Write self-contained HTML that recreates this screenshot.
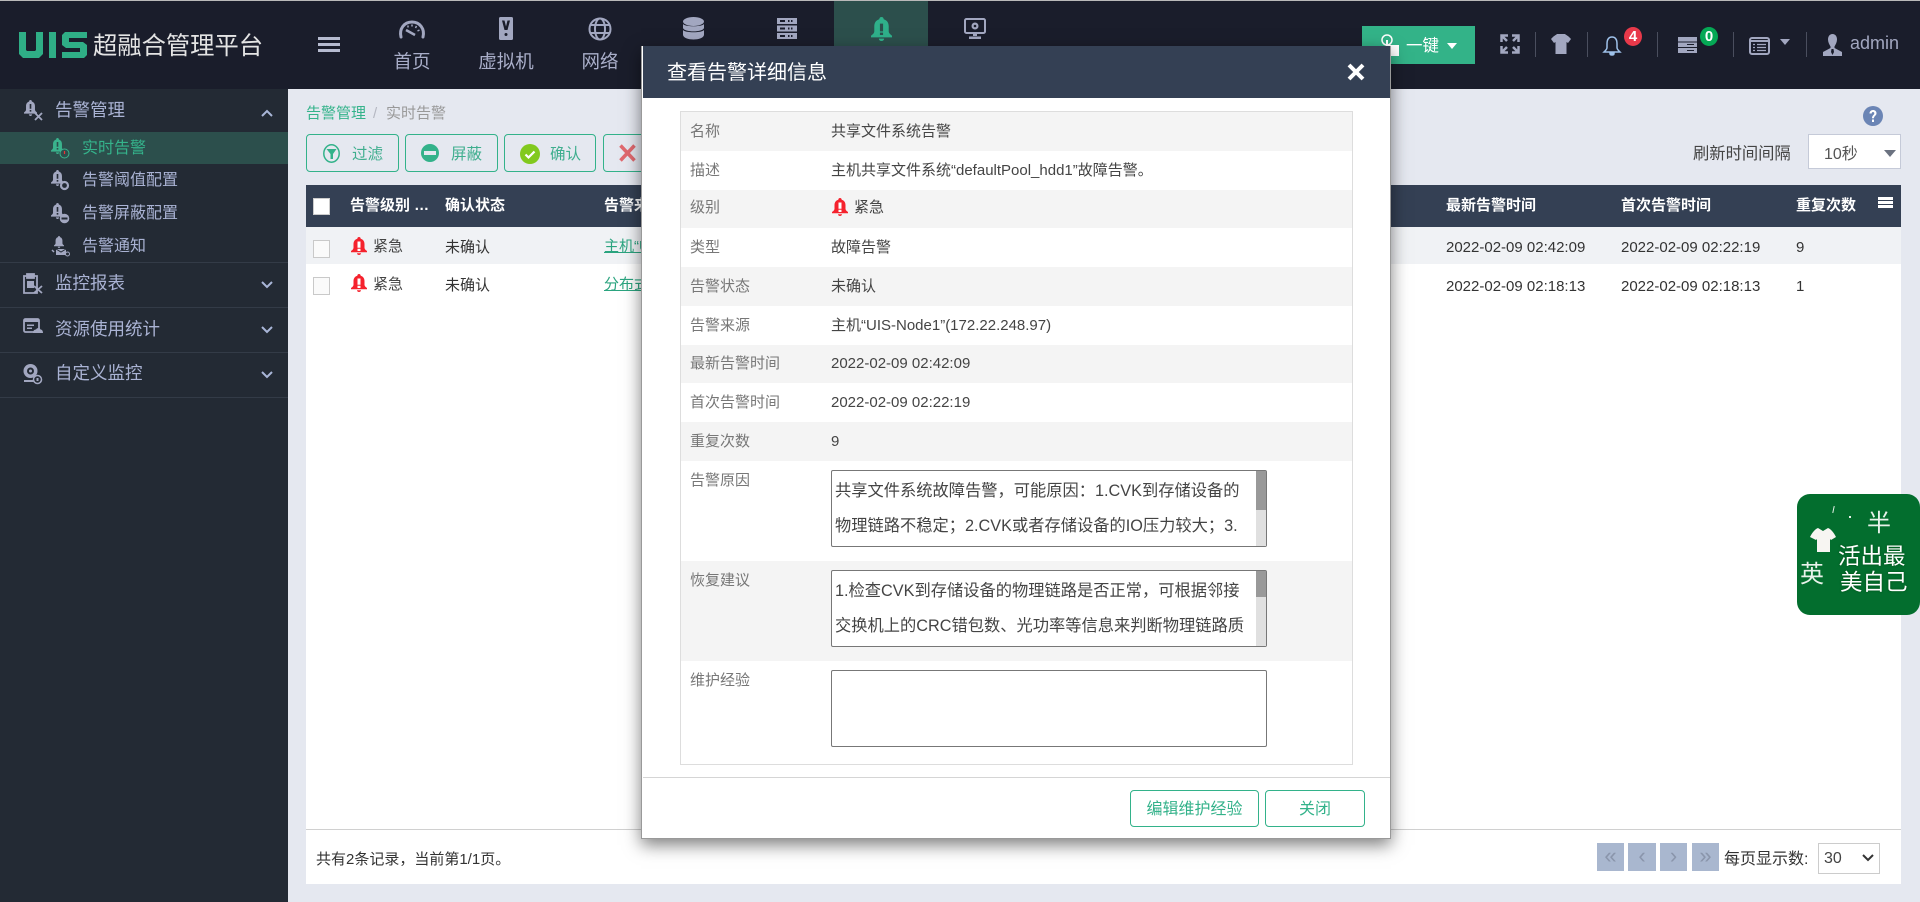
<!DOCTYPE html>
<html lang="zh"><head><meta charset="utf-8"><title>UIS 超融合管理平台</title>
<style>
*{box-sizing:border-box}
html,body{margin:0;padding:0}
body{width:1920px;height:902px;position:relative;overflow:hidden;background:#e5e8f0;font-family:"Liberation Sans","Noto Sans CJK SC",sans-serif;font-size:15px;color:#444}
.a{position:absolute}
.t{position:absolute;line-height:20px;white-space:nowrap}
svg{position:absolute;overflow:visible}
.nav{color:#a9aec9;font-size:18.5px;transform:translateX(-50%)}
.grp{color:#aab3d4;font-size:17.5px;left:55px}
.sub{color:#aab3d4;font-size:16px;left:82px}
.sep{position:absolute;height:1px;left:0;width:288px;background:#333b47}
.vs{position:absolute;top:32px;width:1px;height:25px;background:#4a4e5e}
.btn{position:absolute;top:134px;height:38px;border:1px solid #33b28a;border-radius:4px}
.bt{color:#3fae8e;font-size:15.5px}
.th{color:#fff;font-size:15px;font-weight:bold;top:196px}
.row{position:absolute;left:681px;width:671px;height:39px}
.g{background:#f4f4f4}
.l{left:690px;color:#777;font-size:15px}
.v{left:831px;color:#444;font-size:15px}
.ta{position:absolute;left:831px;width:436px;height:77px;border:1px solid #777;border-radius:2px;background:#fff}
.sb{position:absolute;right:0;top:0;bottom:0;width:10px;background:#e0e0e0}
.sb i{display:block;height:39px;background:#999}
.tl{left:835px;color:#444;font-size:16.25px}
.pg{position:absolute;top:843px;height:28px;background:#a9b7cf;color:#8a95ab;text-align:center;line-height:25px;font-size:22px}
.ck{position:absolute;left:313px;width:17px;height:18px;background:#fafafa;border:1px solid #c9c9c9}
.hd{position:absolute;left:0;top:0;width:1920px;height:89px;background:#1a1d2b}
</style></head><body>
<svg width="0" height="0" style="position:absolute"><defs>
<symbol id="bell" viewBox="0 0 16 20" preserveAspectRatio="none"><path d="M8 0c1.100 0 1.600.8 1.700 1.900 2.600.9 3.800 3 3.800 6V12c0 1.400 1 2.400 2.500 3.600V17H0v-1.400C1.500 14.400 2.500 13.400 2.500 12V7.900c0-3 1.200-5.100 3.800-6C6.400.8 6.900 0 8 0zM6 18h4c0 1.200-.9 2-2 2s-2-.8-2-2z"/></symbol>
</defs></svg>

<div class="hd"></div>
<div class="a" style="left:0;top:0;width:1920px;height:1px;background:#b9b9b9"></div>

<!-- logo -->
<svg style="left:19px;top:32px" width="68" height="26" viewBox="0 0 68 26"><g fill="#2fae86"><path d="M0 0h7v18l1 1h8l1-1V0h7v22l-4 4H4l-4-4z"/><path d="M30 0h7v26h-7z"/><path d="M46 0h22v6H50v4h14l4 3v10l-3 3H43v-6h18v-4H47l-4-3V3z"/></g></svg>
<div class="t" style="left:93px;top:35px;font-size:24.3px;line-height:24px;color:#e4e4e4">超融合管理平台</div>

<!-- hamburger -->
<div class="a" style="left:318px;top:37px;width:22px;height:3px;background:#b6bbd0"></div>
<div class="a" style="left:318px;top:43px;width:22px;height:3px;background:#b6bbd0"></div>
<div class="a" style="left:318px;top:49px;width:22px;height:3px;background:#b6bbd0"></div>

<!-- nav -->
<div class="a" style="left:834px;top:1px;width:94px;height:46px;background:#2c4f4c"></div>
<svg style="left:399px;top:20px" width="26" height="18" viewBox="0 0 26 18" fill="none" stroke="#a2a7c0"><path d="M2 17C0 9 5 2 13 2s13 7 11 15" stroke-width="3" stroke-linecap="round"/><path d="M7 10l9 5" stroke-width="2.500"/><path d="M9 5.500v2M13 4.500v2M17.500 6l-1 2M20.500 10l-2 1" stroke-width="1.500"/></svg>
<svg style="left:499px;top:17px" width="14" height="23" viewBox="0 0 14 23"><rect width="14" height="23" rx="1.500" fill="#a2a7c0"/><path d="M3 3.500h2.500L7 9.500 8.500 3.500H11L8.500 13h-3z" fill="#1a1d2b"/><circle cx="7" cy="17.500" r="1.500" fill="#1a1d2b"/></svg>
<svg style="left:588px;top:17px" width="24" height="24" viewBox="0 0 24 24" fill="none" stroke="#a2a7c0" stroke-width="2"><circle cx="12" cy="12" r="10.500"/><ellipse cx="12" cy="12" rx="5" ry="10.500"/><path d="M2.500 8h19M2.500 16h19"/></svg>
<svg style="left:683px;top:17px" width="21" height="23" viewBox="0 0 21 23" fill="#a2a7c0"><ellipse cx="10.500" cy="4.500" rx="10.500" ry="4.500"/><path d="M0 7c2 3 19 3 21 0v4c-1 4.500-20 4.500-21 0zM0 13c2 3 19 3 21 0v5c-1 6-20 6-21 0z"/></svg>
<svg style="left:777px;top:18px" width="20" height="21" viewBox="0 0 20 21" fill="#a2a7c0"><path d="M0 0h20v6H0zM0 7.500h20v6H0zM0 15h20v6H0z"/><path d="M3 2h5v2H3zM3 9.500h5v2H3zM3 17h5v2H3zM11 2h1.500v2H11zM14 2h1.500v2H14zM11 9.500h1.500v2H11zM14 9.500h1.500v2H14zM11 17h1.500v2H11zM14 17h1.500v2H14z" fill="#1a1d2b"/></svg>
<svg style="left:871px;top:17px" width="21" height="24" viewBox="0 0 16 20" preserveAspectRatio="none" fill="#2fb08a"><use href="#bell"/><path d="M6.800 5.500h2.400V12H6.800zM6.800 13h2.400v2H6.800z" fill="#2c4f4c"/></svg>
<svg style="left:964px;top:18px" width="22" height="21" viewBox="0 0 22 21"><rect x="1" y="1" width="20" height="14" rx="1.500" fill="none" stroke="#a2a7c0" stroke-width="2"/><circle cx="11" cy="8" r="3.500" fill="#a2a7c0"/><circle cx="11" cy="8" r="1.300" fill="#1a1d2b"/><path d="M9 16h4v2H9zM5 18.500h12V21H5z" fill="#a2a7c0"/></svg>
<div class="t nav" style="left:412px;top:52px">首页</div>
<div class="t nav" style="left:506px;top:52px">虚拟机</div>
<div class="t nav" style="left:600px;top:52px">网络</div>

<!-- top right -->
<div class="a" style="left:1362px;top:26px;width:113px;height:38px;background:#33b388"></div>
<svg style="left:1380px;top:33px" width="20" height="24" viewBox="0 0 20 24" fill="none"><circle cx="7" cy="7" r="5" stroke="#fff" stroke-width="1.500"/><path d="M6 7h2v8H6z" fill="#fff"/><path d="M7 12h12v11H8z" fill="#fff"/></svg>
<div class="t" style="left:1406px;top:36px;color:#fff;font-size:16.5px">一键</div>
<div class="a" style="left:1447px;top:43px;border-left:5px solid transparent;border-right:5px solid transparent;border-top:6px solid #fff"></div>
<svg style="left:1500px;top:34px" width="20" height="20" viewBox="0 0 20 20" fill="none" stroke="#a2a7c0" stroke-width="2.500"><path d="M1.500 8V1.500H8M1.500 1.500L7 7M18.500 8V1.500H12M18.500 1.500L13 7M1.500 12v6.500H8M1.500 18.500L7 13M18.500 12v6.500H12M18.500 18.500L13 13"/></svg>
<div class="vs" style="left:1535px"></div>
<svg style="left:1551px;top:34px" width="20" height="20" viewBox="0 0 20 20" fill="#a2a7c0"><path d="M6 0h8c1 1 3 1.500 6 5l-3 4-1.500-1V20h-11V8L3 9 0 5c3-3.500 5-4 6-5z"/></svg>
<div class="vs" style="left:1587px"></div>
<svg style="left:1603px;top:36px" width="18" height="20" viewBox="0 0 18 20" fill="none" stroke="#9fc2ea" stroke-width="1.500"><path d="M9 1c4 0 5 3.500 5 7v3.500c0 2 1.500 3 3 4.500H1c1.500-1.500 3-2.500 3-4.500V8c0-3.500 1-7 5-7zM7 17.500h4c0 2-4 2-4 0z"/></svg>
<div class="a" style="left:1624px;top:27px;width:18px;height:19px;border-radius:50%;background:#e8394a;color:#fff;text-align:center;line-height:19px;font-size:15px;font-weight:bold">4</div>
<div class="vs" style="left:1657px"></div>
<svg style="left:1678px;top:37px" width="19" height="16" viewBox="0 0 19 16" fill="#a2a7c0"><path d="M0 0h19v4.500H0zM0 5.500h19V10H0zM0 11h19v5H0z"/><path d="M9 7h7v1H9zM9 13h7v1H9z" fill="#1a1d2b"/></svg>
<div class="a" style="left:1700px;top:27px;width:18px;height:19px;border-radius:50%;background:#05a855;color:#fff;text-align:center;line-height:19px;font-size:15px;font-weight:bold">0</div>
<div class="vs" style="left:1733px"></div>
<svg style="left:1749px;top:37px" width="21" height="18" viewBox="0 0 21 18" fill="none" stroke="#a2a7c0"><rect x="1" y="1" width="19" height="16" rx="2" stroke-width="2"/><path d="M1 4h19" stroke-width="2"/><path d="M8 7.500h9M8 10.500h9M8 13.500h9M4 7.500h2M4 10.500h2M4 13.500h2" stroke-width="1.300"/></svg>
<div class="a" style="left:1780px;top:39px;border-left:5px solid transparent;border-right:5px solid transparent;border-top:6px solid #a2a7c0"></div>
<div class="vs" style="left:1806px"></div>
<svg style="left:1823px;top:34px" width="19" height="22" viewBox="0 0 19 22" fill="#a2a7c0"><path d="M9.500 0c3 0 4.500 2.500 4.500 5.500 0 2.500-1.300 5-2.500 7v1.500l7.500 4V22H0v-4l7.500-4v-1.500C6.300 10.500 5 8 5 5.500 5 2.500 6.500 0 9.500 0z"/><path d="M8.500 15h2l.5 3-1.500 3-1.500-3z" fill="#1a1d2b"/></svg>
<div class="t" style="left:1850px;top:33px;color:#a2a7c0;font-size:18px">admin</div>

<!-- sidebar -->
<div class="a" style="left:0;top:89px;width:288px;height:813px;background:#232a34"></div>
<div class="a" style="left:0;top:132px;width:288px;height:32px;background:#2c4f4c"></div>
<svg style="left:24px;top:100px" width="19" height="21" viewBox="0 0 19 21"><svg width="13" height="16" viewBox="0 0 16 20" preserveAspectRatio="none" fill="#a2a7c0"><use href="#bell"/><path d="M7 5h2v6H7zM7 12.500h2v2H7z" fill="#232a34"/></svg><path d="M11 13l7 7M18 13l-7 7" stroke="#a2a7c0" stroke-width="1.800"/></svg>
<div class="t grp" style="top:100px">告警管理</div>
<svg style="left:261px;top:109px" width="12" height="8" fill="none" stroke="#a9b6d8" stroke-width="2"><path d="M1 7l5-5 5 5"/></svg>
<svg style="left:51px;top:138px" width="19" height="21" viewBox="0 0 19 21"><svg width="13" height="16" viewBox="0 0 16 20" preserveAspectRatio="none" fill="#3ab38d"><use href="#bell"/><path d="M7 5h2v6H7zM7 12.500h2v2H7z" fill="#2c4f4c"/></svg><circle cx="13.500" cy="15.500" r="4.500" fill="#2c4f4c" stroke="#3ab38d"/><path d="M13.500 13v3" stroke="#e33" stroke-width="1.200"/></svg>
<div class="t sub" style="top:139px;color:#35b38b">实时告警</div>
<svg style="left:51px;top:170px" width="19" height="21" viewBox="0 0 19 21"><svg width="13" height="16" viewBox="0 0 16 20" preserveAspectRatio="none" fill="#a2a7c0"><use href="#bell"/><path d="M7 5h2v6H7zM7 12.500h2v2H7z" fill="#232a34"/></svg><circle cx="13.500" cy="15.500" r="3.500" fill="#232a34" stroke="#a2a7c0" stroke-width="2.200"/></svg>
<div class="t sub" style="top:171px">告警阈值配置</div>
<svg style="left:51px;top:203px" width="19" height="21" viewBox="0 0 19 21"><svg width="13" height="16" viewBox="0 0 16 20" preserveAspectRatio="none" fill="#a2a7c0"><use href="#bell"/><path d="M7 5h2v6H7zM7 12.500h2v2H7z" fill="#232a34"/></svg><circle cx="13.500" cy="15.500" r="4.800" fill="#a2a7c0"/><path d="M10.500 14.500h6v2h-6z" fill="#232a34"/></svg>
<div class="t sub" style="top:204px">告警屏蔽配置</div>
<svg style="left:51px;top:236px" width="19" height="21" viewBox="0 0 19 21"><svg x="3" width="10" height="12" viewBox="0 0 16 20" preserveAspectRatio="none" fill="#a2a7c0"><use href="#bell"/></svg><path d="M5 13h10v6H5z" fill="#a2a7c0"/><path d="M5 13l5 3 5-3" stroke="#232a34" fill="none"/><circle cx="16.500" cy="18" r="2" fill="none" stroke="#a2a7c0"/><path d="M1 14l2 2" stroke="#a2a7c0" stroke-width="1.500"/></svg>
<div class="t sub" style="top:237px">告警通知</div>
<div class="sep" style="top:262px"></div>

<svg style="left:23px;top:273px" width="20" height="21" viewBox="0 0 20 21" fill="none" stroke="#a2a7c0" stroke-width="1.800"><path d="M11 3h3v17H1V3h3"/><path d="M4 1h7v4H4z" fill="#a2a7c0"/><path d="M4 8h7v7H4z" fill="#a2a7c0" stroke="none"/><path d="M11 13l8 7M19 13l-8 7" stroke-width="1.800"/></svg>
<div class="t grp" style="top:273px">监控报表</div>
<svg style="left:261px;top:281px" width="12" height="8" fill="none" stroke="#a9b6d8" stroke-width="2"><path d="M1 1l5 5 5-5"/></svg>
<div class="sep" style="top:307px"></div>

<svg style="left:23px;top:318px" width="20" height="16" viewBox="0 0 20 16"><rect x="1" y="1" width="15" height="13" rx="1.500" fill="none" stroke="#a2a7c0" stroke-width="1.800"/><path d="M1 1h15v3H1zM4 6.500h7v1.500H4zM4 9.500h5V11H4z" fill="#a2a7c0"/><path d="M10 15c0-3 2-3.500 3-3.500 1-2 4-2 4.500 0 2 0 2.500 2 2.500 3.500z" fill="#a2a7c0"/></svg>
<div class="t grp" style="top:319px">资源使用统计</div>
<svg style="left:261px;top:326px" width="12" height="8" fill="none" stroke="#a9b6d8" stroke-width="2"><path d="M1 1l5 5 5-5"/></svg>
<div class="sep" style="top:352px"></div>

<svg style="left:23px;top:364px" width="19" height="20" viewBox="0 0 19 20"><circle cx="7.500" cy="7" r="7" fill="#a2a7c0"/><circle cx="7.500" cy="7" r="3.500" fill="#232a34"/><circle cx="7.500" cy="7" r="1.500" fill="#a2a7c0"/><path d="M1 16h11v2H1z" fill="#a2a7c0"/><circle cx="14.500" cy="15.500" r="4" fill="#232a34" stroke="#a2a7c0" stroke-width="1.500"/><rect x="13.500" y="14" width="2" height="3" fill="#a2a7c0"/></svg>
<div class="t grp" style="top:363px">自定义监控</div>
<svg style="left:261px;top:371px" width="12" height="8" fill="none" stroke="#a9b6d8" stroke-width="2"><path d="M1 1l5 5 5-5"/></svg>
<div class="sep" style="top:397px"></div>

<!-- breadcrumb -->
<div class="t" style="left:306px;top:104px;font-size:15px;color:#35b38b">告警管理</div>
<div class="t" style="left:373px;top:104px;font-size:15px;color:#b5b8c2">/</div>
<div class="t" style="left:386px;top:104px;font-size:15px;color:#999">实时告警</div>
<svg style="left:1863px;top:106px" width="20" height="20" viewBox="0 0 20 20"><circle cx="10" cy="10" r="10" fill="#6b85b5"/><path d="M6.500 7.500C6.500 5.500 8 4 10 4s3.500 1.300 3.500 3.200c0 2.500-2.500 2.500-2.500 5H9c0-3 2.300-3.200 2.300-5 0-.7-.5-1.200-1.300-1.200s-1.300.6-1.300 1.500zM9 13.500h2V16H9z" fill="#fff"/></svg>

<!-- buttons -->
<div class="btn" style="left:306px;width:93px"></div>
<svg style="left:323px;top:144px" width="17" height="19" viewBox="0 0 17 19"><ellipse cx="8.500" cy="9.500" rx="7.700" ry="8.700" fill="none" stroke="#33b28a" stroke-width="1.500"/><path d="M3.500 5h10L10 10v5H7.500v-5z" fill="#33b28a"/></svg>
<div class="t bt" style="left:352px;top:145px">过滤</div>
<div class="btn" style="left:405px;width:93px"></div>
<svg style="left:421px;top:144px" width="18" height="18" viewBox="0 0 18 18"><circle cx="9" cy="9" r="9" fill="#33b28a"/><rect x="3" y="7" width="12" height="4" fill="#e5e8f0"/></svg>
<div class="t bt" style="left:451px;top:145px">屏蔽</div>
<div class="btn" style="left:504px;width:92px"></div>
<svg style="left:520px;top:144px" width="20" height="20" viewBox="0 0 20 20"><circle cx="10" cy="10" r="10" fill="#82c91e"/><path d="M5.500 10.500l3 3 6-6" fill="none" stroke="#fff" stroke-width="2.200"/></svg>
<div class="t bt" style="left:550px;top:145px">确认</div>
<div class="btn" style="left:603px;width:60px"></div>
<svg style="left:619px;top:144px" width="17" height="18" viewBox="0 0 17 18"><path d="M1.500 1.500l14 15M15.500 1.500l-14 15" stroke="#e0696f" stroke-width="3.500"/></svg>

<div class="t" style="left:1693px;top:144px;font-size:16.3px;color:#444">刷新时间间隔</div>
<div class="a" style="left:1808px;top:134px;width:93px;height:35px;background:#fff;border:1px solid #c5cad8"></div>
<div class="t" style="left:1824px;top:145px;font-size:16px;color:#555">10秒</div>
<div class="a" style="left:1884px;top:150px;border-left:6px solid transparent;border-right:6px solid transparent;border-top:7px solid #6b7280"></div>

<!-- table panel -->
<div class="a" style="left:306px;top:185px;width:1595px;height:699px;background:#fff"></div>
<div class="a" style="left:306px;top:185px;width:1595px;height:42px;background:#344054"></div>
<div class="a" style="left:306px;top:227px;width:1595px;height:37px;background:#f0f2f5"></div>
<div class="a" style="left:313px;top:198px;width:17px;height:17px;background:#fff;border:1px solid #ccc"></div>
<div class="t th" style="left:350px">告警级别 …</div>
<div class="t th" style="left:445px">确认状态</div>
<div class="t th" style="left:604px">告警来源</div>
<div class="t th" style="left:1446px">最新告警时间</div>
<div class="t th" style="left:1621px">首次告警时间</div>
<div class="t th" style="left:1796px">重复次数</div>
<div class="a" style="left:1878px;top:197px;width:15px;height:3px;background:#fff"></div>
<div class="a" style="left:1878px;top:201px;width:15px;height:3px;background:#fff"></div>
<div class="a" style="left:1878px;top:205px;width:15px;height:3px;background:#fff"></div>

<div class="ck" style="top:240px"></div>
<svg style="left:351px;top:237px" width="16" height="18" viewBox="0 0 16 20" preserveAspectRatio="none" fill="#f5222d"><use href="#bell"/><path d="M6.500 5h3v7h-3zM6.500 13h3v2.500h-3z" fill="#fff"/></svg>
<div class="t" style="left:373px;top:237px">紧急</div>
<div class="t" style="left:445px;top:238px;color:#333">未确认</div>
<div class="t" style="left:604px;top:237px;color:#2ba47f;text-decoration:underline">主机“UIS-Node1”</div>
<div class="t" style="left:1446px;top:238px;color:#333">2022-02-09 02:42:09</div>
<div class="t" style="left:1621px;top:238px;color:#333">2022-02-09 02:22:19</div>
<div class="t" style="left:1796px;top:238px;color:#333">9</div>

<div class="ck" style="top:277px"></div>
<svg style="left:351px;top:274px" width="16" height="18" viewBox="0 0 16 20" preserveAspectRatio="none" fill="#f5222d"><use href="#bell"/><path d="M6.500 5h3v7h-3zM6.500 13h3v2.500h-3z" fill="#fff"/></svg>
<div class="t" style="left:373px;top:275px">紧急</div>
<div class="t" style="left:445px;top:276px;color:#333">未确认</div>
<div class="t" style="left:604px;top:275px;color:#2ba47f;text-decoration:underline">分布式存储</div>
<div class="t" style="left:1446px;top:277px;color:#333">2022-02-09 02:18:13</div>
<div class="t" style="left:1621px;top:277px;color:#333">2022-02-09 02:18:13</div>
<div class="t" style="left:1796px;top:277px;color:#333">1</div>

<div class="a" style="left:306px;top:829px;width:1595px;height:1px;background:#d0d0d0"></div>
<div class="t" style="left:316px;top:850px;color:#333">共有2条记录，当前第1/1页。</div>
<div class="pg" style="left:1597px;width:27px">«</div>
<div class="pg" style="left:1628px;width:28px">‹</div>
<div class="pg" style="left:1660px;width:27px">›</div>
<div class="pg" style="left:1692px;width:27px">»</div>
<div class="t" style="left:1724px;top:850px;font-size:16px;color:#333">每页显示数:</div>
<div class="a" style="left:1818px;top:843px;width:62px;height:31px;border:1px solid #ccc;background:#fff"></div>
<div class="t" style="left:1824px;top:849px;font-size:16px;color:#444">30</div>
<svg style="left:1862px;top:854px" width="12" height="8" fill="none" stroke="#333" stroke-width="2"><path d="M1 1l5 5 5-5"/></svg>

<!-- floating widget -->
<div class="a" style="left:1797px;top:494px;width:123px;height:121px;background:#036e2e;border-radius:13px"></div>
<div class="t" style="left:1867px;top:514px;color:#e8f2ea;font-size:24px">半</div>
<div class="t" style="left:1800px;top:565px;color:#e8f2ea;font-size:24px">英</div>
<div class="t" style="left:1838px;top:547px;color:#fff;font-size:22.5px;text-shadow:0 0 2px #004d14">活出最</div>
<div class="t" style="left:1840px;top:573px;color:#fff;font-size:22.5px;text-shadow:0 0 2px #004d14">美自己</div>
<svg style="left:1810px;top:528px" width="26" height="24" viewBox="0 0 26 24" fill="#f7f5f2"><path d="M8 0l5 3 5-3c3 1 6 5 8 9l-5 3-1-1v13H7V11l-1 1-6-3c2-4 5-8 8-9z"/></svg>
<div class="a" style="left:1833px;top:506px;width:1px;height:7px;background:#e8f2ea;transform:rotate(12deg)"></div>
<div class="a" style="left:1849px;top:516px;width:2px;height:2px;background:#e8f2ea"></div>

<!-- modal -->
<div class="a" style="left:641px;top:46px;width:750px;height:793px;background:#fff;box-shadow:0 6px 16px rgba(0,0,0,.5);border:1px solid #999;border-top:none"></div>
<div class="a" style="left:643px;top:46px;width:747px;height:52px;background:#344054"></div>
<div class="t" style="left:667px;top:63px;font-size:20px;color:#fff">查看告警详细信息</div>
<svg style="left:1347px;top:63px" width="18" height="18" viewBox="0 0 18 18"><path d="M2 2l14 14M16 2L2 16" stroke="#fff" stroke-width="4"/></svg>

<div class="a" style="left:680px;top:111px;width:673px;height:654px;border:1px solid #ddd"></div>
<div class="row g" style="top:112px"></div>
<div class="row g" style="top:190px;height:38px"></div>
<div class="row g" style="top:267px"></div>
<div class="row g" style="top:345px;height:38px"></div>
<div class="row g" style="top:422px"></div>
<div class="row g" style="top:561px;height:100px"></div>

<div class="t l" style="top:122px">名称</div><div class="t v" style="top:122px">共享文件系统告警</div>
<div class="t l" style="top:161px">描述</div><div class="t v" style="top:161px">主机共享文件系统“defaultPool_hdd1”故障告警。</div>
<div class="t l" style="top:198px">级别</div>
<svg style="left:832px;top:198px" width="16" height="18" viewBox="0 0 16 20" preserveAspectRatio="none" fill="#f5222d"><use href="#bell"/><path d="M6.500 5h3v7h-3zM6.500 13h3v2.500h-3z" fill="#fff"/></svg>
<div class="t v" style="left:854px;top:198px">紧急</div>
<div class="t l" style="top:238px">类型</div><div class="t v" style="top:238px">故障告警</div>
<div class="t l" style="top:277px">告警状态</div><div class="t v" style="top:277px">未确认</div>
<div class="t l" style="top:316px">告警来源</div><div class="t v" style="top:316px">主机“UIS-Node1”(172.22.248.97)</div>
<div class="t l" style="top:354px">最新告警时间</div><div class="t v" style="top:354px">2022-02-09 02:42:09</div>
<div class="t l" style="top:393px">首次告警时间</div><div class="t v" style="top:393px">2022-02-09 02:22:19</div>
<div class="t l" style="top:432px">重复次数</div><div class="t v" style="top:432px">9</div>

<div class="t l" style="top:471px">告警原因</div>
<div class="ta" style="top:470px"><div class="sb"><i></i></div></div>
<div class="t tl" style="top:481px">共享文件系统故障告警，可能原因：1.CVK到存储设备的</div>
<div class="t tl" style="top:516px">物理链路不稳定；2.CVK或者存储设备的IO压力较大；3.</div>

<div class="t l" style="top:571px">恢复建议</div>
<div class="ta" style="top:570px"><div class="sb"><i style="height:26px"></i></div></div>
<div class="t tl" style="top:581px">1.检查CVK到存储设备的物理链路是否正常，可根据邻接</div>
<div class="t tl" style="top:616px">交换机上的CRC错包数、光功率等信息来判断物理链路质</div>

<div class="t l" style="top:671px">维护经验</div>
<div class="ta" style="top:670px"></div>

<div class="a" style="left:643px;top:777px;width:747px;height:1px;background:#d5d5d5"></div>
<div class="a" style="left:1130px;top:790px;width:129px;height:37px;border:1px solid #33b28a;border-radius:4px;color:#33b28a;font-size:16px;text-align:center;line-height:37px">编辑维护经验</div>
<div class="a" style="left:1265px;top:790px;width:100px;height:37px;border:1px solid #33b28a;border-radius:4px;color:#33b28a;font-size:16px;text-align:center;line-height:37px">关闭</div>
</body></html>
